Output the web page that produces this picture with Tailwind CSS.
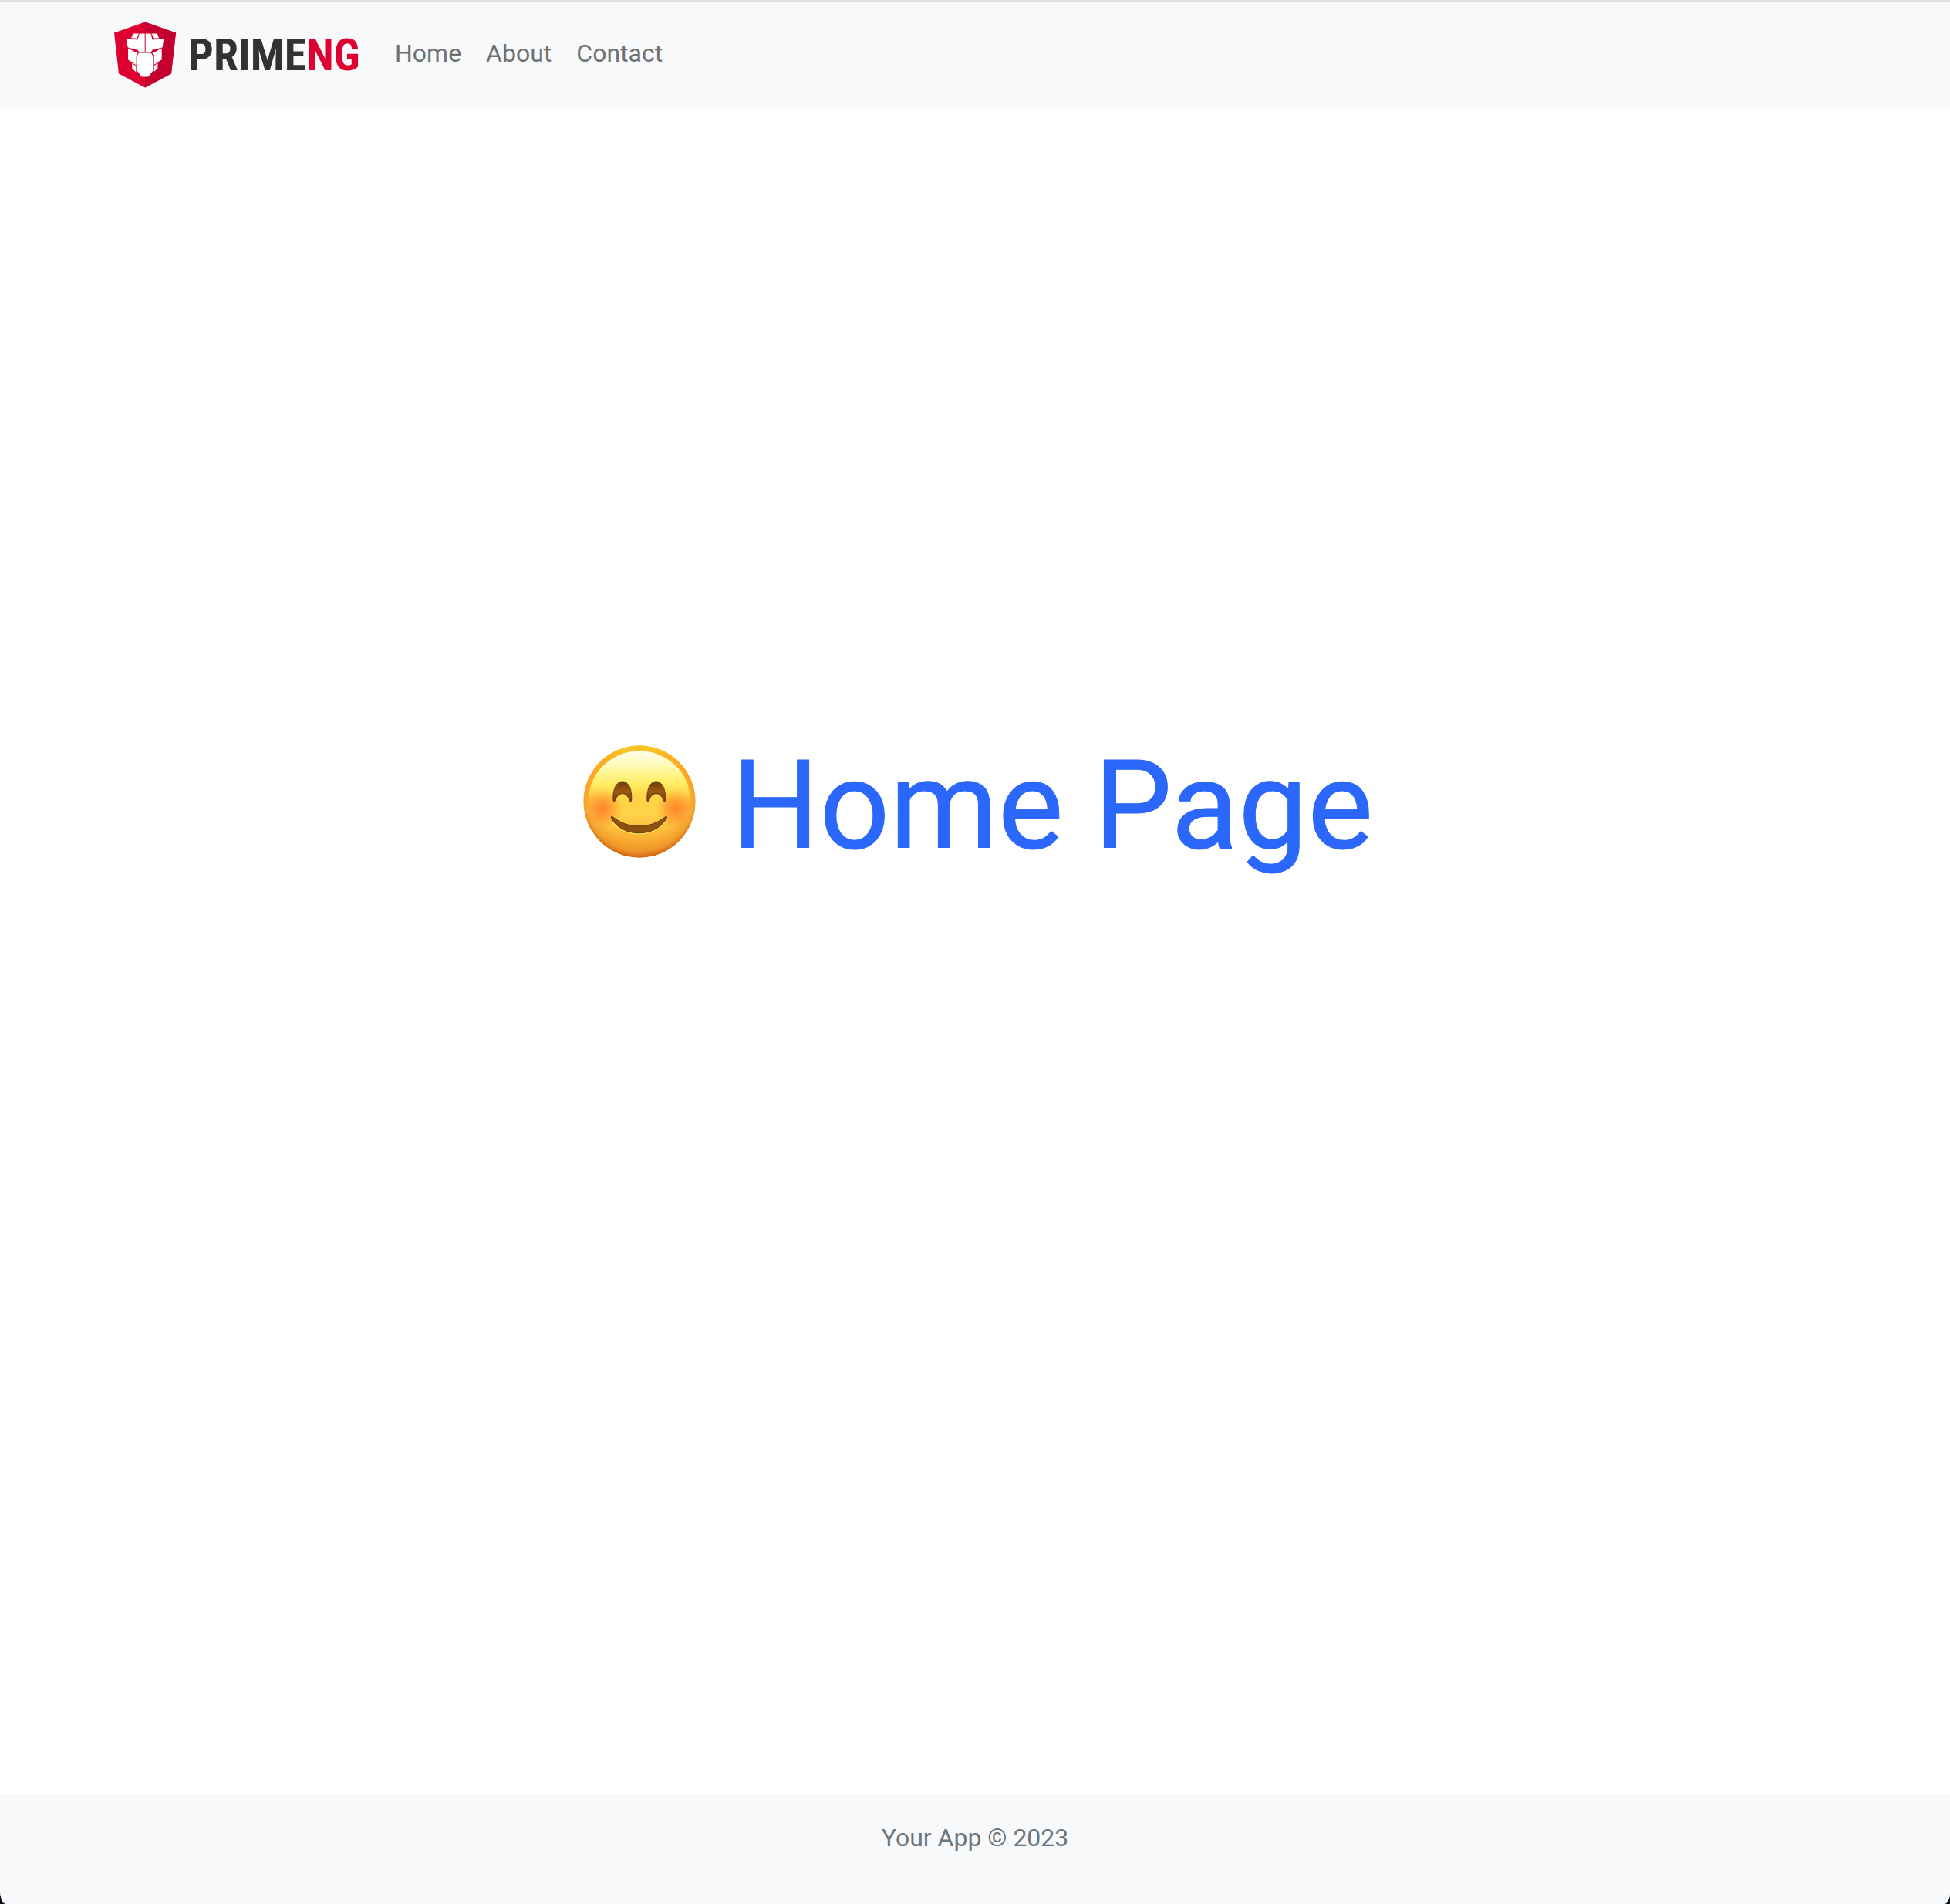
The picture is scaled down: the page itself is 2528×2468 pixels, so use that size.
<!DOCTYPE html>
<html lang="en">
<head>
<meta charset="utf-8">
<title>PrimeNG App</title>
<script src="https://cdn.jsdelivr.net/npm/@tailwindcss/browser@4"></script>
</head>
<body class="bg-[#0c1218] font-[Roboto,sans-serif] text-[32px] leading-[48px]">
<div class="flex min-h-screen flex-col overflow-hidden rounded-bl-[8px_18px] rounded-br-[8px_14px] border-t-2 border-[#dfe0de] bg-white">
  <header class="bg-[#f8f9fb]">
    <nav class="flex h-[138px] items-center px-[148px]" aria-label="Main">
      <a href="#" class="flex w-[316px] items-center gap-4" aria-label="PrimeNG">
        <svg class="h-[86px] w-20 shrink-0" viewBox="54 53 240 257" aria-hidden="true">
          <path fill="#dd0031" d="M174 54 54 96l18 159 102 54 102-54 18-159z"/>
          <path fill="#c3002f" d="M174 54v255l102-54 18-159z"/>
          <g fill="#fff">
            <path d="M130 99h20l-8 19-22-2z"/>
            <path d="M219 99h-20l8 19 22-2z"/>
            <path d="M153 99h20v73l-29-3-37-17-6-34 44 5z"/>
            <path d="M196 99h-20v73l29-3 37-17 5-34-44 5z"/>
            <path d="M108 156l31 16 7 2-6 10v38l-32-22z"/>
            <path d="M239 156l-31 16-6 2 5 10v38l32-22z"/>
            <path d="M150 174h47l8 12v58l-18 23h-26l-18-23v-58z"/>
            <path d="M123 214l16 12v23l-15-15z"/>
            <path d="M224 214l-16 12v23l15-15z"/>
          </g>
          <path fill="#dd0031" d="M109 154l37 9 4 8-13 1z"/>
          <path fill="#c3002f" d="M238 154l-36 9-4 8 13 1z"/>
        </svg>
        <span class="font-['Liberation_Sans_Narrow','Roboto_Condensed','Open_Sans_Condensed',Roboto,sans-serif] text-[58px] leading-[64px] font-bold whitespace-nowrap text-[#313234]">PRIME<span class="text-[#dd0031]">NG</span></span>
      </a>
      <ul class="mb-1 ml-8 flex text-[#707171]">
        <li><a href="#" class="block px-4">Home</a></li>
        <li><a href="#" class="block px-4">About</a></li>
        <li><a href="#" class="block px-4">Contact</a></li>
      </ul>
    </nav>
  </header>
  <main class="flex-1 pt-[809px]">
    <h1 class="flex items-center justify-center gap-[46px] pl-2 text-[160px] leading-[192px] text-[#2a67fa] [-webkit-text-stroke:1px_#2a67fa]">
      <svg class="mb-3 size-[146px]" viewBox="79 78 438 438" role="img" aria-label="Smiling face">
        <defs>
          <linearGradient id="face" x1="0" y1="0" x2="0" y2="1">
            <stop offset="0" stop-color="#fcca26"/>
            <stop offset=".35" stop-color="#fef04e"/>
            <stop offset=".6" stop-color="#fdd44a"/>
            <stop offset=".8" stop-color="#fab537"/>
            <stop offset="1" stop-color="#ec9c2a"/>
          </linearGradient>
          <radialGradient id="rim" cx=".5" cy=".46" r=".55">
            <stop offset=".68" stop-color="#f58a20" stop-opacity="0"/>
            <stop offset=".88" stop-color="#e98420" stop-opacity=".45"/>
            <stop offset="1" stop-color="#bd5012" stop-opacity=".95"/>
          </radialGradient>
          <linearGradient id="crown" x1="0" y1="0" x2="0" y2="1">
            <stop offset="0" stop-color="#fcc822"/>
            <stop offset=".12" stop-color="#fbb020"/>
            <stop offset=".4" stop-color="#ff8e20" stop-opacity=".6"/>
            <stop offset=".6" stop-color="#ff8e20" stop-opacity="0"/>
          </linearGradient>
          <linearGradient id="shine" x1="0" y1="0" x2="0" y2="1">
            <stop offset="0" stop-color="#fffde8"/>
            <stop offset=".15" stop-color="#fffbb8"/>
            <stop offset=".34" stop-color="#fef768" stop-opacity=".85"/>
            <stop offset=".62" stop-color="#fee444" stop-opacity="0"/>
          </linearGradient>
          <radialGradient id="cheek">
            <stop offset="0" stop-color="#ff7f2a" stop-opacity=".95"/>
            <stop offset=".45" stop-color="#ff8a2c" stop-opacity=".65"/>
            <stop offset="1" stop-color="#ff962c" stop-opacity="0"/>
          </radialGradient>
          <linearGradient id="eye" x1="0" y1="0" x2="0" y2="1">
            <stop offset="0" stop-color="#6e3c08"/>
            <stop offset=".5" stop-color="#9c5a14"/>
            <stop offset="1" stop-color="#6b3a08"/>
          </linearGradient>
          <clipPath id="disc"><circle cx="298" cy="297" r="218"/></clipPath>
        </defs>
        <g clip-path="url(#disc)" stroke="none">
          <circle cx="298" cy="297" r="218" fill="url(#face)"/>
          <circle cx="298" cy="297" r="218" fill="url(#rim)"/>
          <circle cx="298" cy="297" r="218" fill="url(#crown)"/>
          <ellipse cx="298" cy="292" rx="198" ry="192" fill="url(#shine)"/>
          <circle cx="154" cy="325" r="78" fill="url(#cheek)"/>
          <circle cx="440" cy="325" r="78" fill="url(#cheek)"/>
        </g>
        <path fill="url(#eye)" stroke="#6b3a08" stroke-width="3" d="M196 293C193 250 208 219 232 219c24 0 38 31 35 74-1 6-5 5-7 0-12-36-44-36-57 0-2 5-6 6-7 0z"/>
        <path fill="url(#eye)" stroke="#6b3a08" stroke-width="3" d="M328 293c-3-43 11-74 35-74s38 31 36 74c-1 6-5 5-7 0-13-36-45-36-57 0-2 5-6 6-7 0z"/>
        <path fill="none" stroke="#fff052" stroke-opacity=".7" stroke-width="4" d="M190 372c47 67 164 67 211 0"/>
        <path fill="#8e5011" stroke="#6b3a08" stroke-width="3" d="M188 360c-2-6 3-7 8-2 58 46 142 46 200 0 5-5 10-4 8 2-39 79-177 79-216 0z"/>
      </svg>
      <span>Home Page</span>
    </h1>
  </main>
  <footer class="h-[143px] bg-[#f8f9fb] pt-[33px] text-center text-[#6c757d]">Your App © 2023</footer>
</div>
</body>
</html>
